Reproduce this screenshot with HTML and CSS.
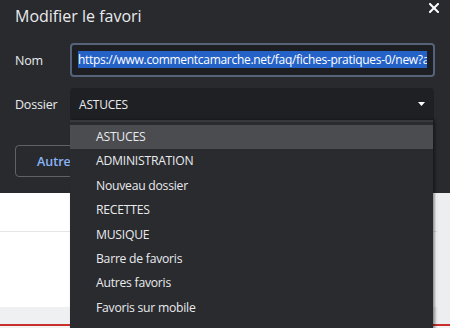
FILE: index.html
```html
<!DOCTYPE html>
<html lang="fr">
<head>
<meta charset="utf-8">
<title>Modifier le favori</title>
<link rel="stylesheet" href="styles.css">
</head>
<body>
<div class="screen">
  <section class="dialog">
    <header class="dialog-head">
      <h1 class="title">Modifier le favori</h1>
      <button class="close" aria-label="Fermer">
        <svg width="10" height="10" viewBox="0 0 10 10"><path d="M1 1L9 9M9 1L1 9" stroke="#ffffff" stroke-width="2" stroke-linecap="square" fill="none"/></svg>
      </button>
    </header>
    <div class="form">
      <span class="label">Nom</span>
      <div class="input"><span class="input-text"><span class="selection">https://www.commentcamarche.net/faq/fiches-pratiques-0/new?a</span></span></div>
      <span class="label">Dossier</span>
      <div class="select">
        <span class="select-text">ASTUCES</span>
        <svg class="arrow" width="7" height="4" viewBox="0 0 7 4"><path d="M0 0H7L3.5 4Z" fill="#ffffff"/></svg>
      </div>
    </div>
    <div class="actions">
      <button class="btn">Autres...</button>
    </div>
  </section>
  <main class="page">
    <div class="page-body">
      <div class="content">
        <div class="rule"></div>
        <div class="band"></div>
      </div>
      <div class="scrollbar"></div>
    </div>
    <div class="redline"></div>
    <div class="foot"></div>
  </main>
  <ul class="dropdown">
    <li class="item active">ASTUCES</li>
    <li class="item">ADMINISTRATION</li>
    <li class="item">Nouveau dossier</li>
    <li class="item">RECETTES</li>
    <li class="item">MUSIQUE</li>
    <li class="item">Barre de favoris</li>
    <li class="item">Autres favoris</li>
    <li class="item">Favoris sur mobile</li>
  </ul>
</div>
</body>
</html>
```

FILE: styles.css
```css
* { box-sizing: border-box; }
html, body { margin: 0; padding: 0; }
body {
  width: 450px;
  height: 328px;
  overflow: hidden;
  background: #ffffff;
  font-family: "Open Sans", "Noto Sans", sans-serif;
}
.screen {
  position: relative;
  width: 450px;
  height: 328px;
  display: flex;
  flex-direction: column;
}
.dialog {
  height: 193px;
  background: #292a2d;
  padding: 0 11px 0 15px;
  color: #e8eaed;
}
.dialog-head {
  display: flex;
  justify-content: space-between;
  align-items: flex-start;
  padding-top: 4px;
}
.title {
  margin: 0;
  font-size: 16px;
  font-weight: 400;
  line-height: 24px;
  color: #e8eaed;
}
.close {
  margin-top: -1px;
  padding: 0;
  border: 0;
  background: none;
  width: 10px;
  height: 10px;
  display: block;
}
.close svg { display: block; }
.form {
  margin-top: 15px;
  display: grid;
  grid-template-columns: 55px 365px;
  grid-template-rows: 34px 32px;
  row-gap: 11px;
  align-items: center;
}
.label {
  font-size: 12.5px;
  letter-spacing: -0.2px;
  color: #e8eaed;
}
.input {
  height: 34px;
  border: 2px solid #56627a;
  border-radius: 4px;
  background: #1e1f22;
  padding: 0 6px;
  display: flex;
  align-items: center;
  overflow: hidden;
}
.input-text {
  white-space: nowrap;
  overflow: hidden;
  display: block;
  font-size: 12px;
  letter-spacing: -0.3px;
  line-height: 18px;
}
.selection {
  background: #2562c8;
  color: #ffffff;
}
.select {
  width: 364px;
  height: 32px;
  background: #1f2023;
  border-radius: 4px 4px 0 0;
  padding: 0 9px;
  display: flex;
  align-items: center;
  justify-content: space-between;
}
.select-text {
  font-size: 12px;
  letter-spacing: -0.2px;
  color: #e8eaed;
}
.arrow { display: block; }
.actions {
  margin-top: 25px;
  display: flex;
}
.btn {
  height: 32px;
  width: 100px;
  border: 1px solid #5f6368;
  border-radius: 4px;
  background: transparent;
  color: #8ab4f8;
  font-family: inherit;
  font-size: 12.5px;
  font-weight: 600;
  text-align: left;
  padding: 0 0 0 21px;
}
.page {
  flex: 1;
  display: flex;
  flex-direction: column;
}
.page-body {
  flex: 1;
  display: flex;
}
.content {
  flex: 1;
  display: flex;
  flex-direction: column;
  background: #ffffff;
}
.rule {
  margin-top: 38px;
  height: 1px;
  background: #e6e6e6;
}
.band {
  margin-top: auto;
  height: 17px;
  background: #eef0f2;
}
.scrollbar {
  width: 13px;
  background: #eceef0;
}
.redline {
  height: 2px;
  background: #c9302c;
}
.foot {
  height: 2px;
  background: #f2f2f2;
}
.dropdown {
  position: absolute;
  left: 70px;
  top: 120px;
  width: 363px;
  bottom: -10px;
  margin: 0;
  padding: 3px 0 0;
  list-style: none;
  background: #2a2b2f;
  border-top: 2px solid #38393d;
  box-shadow: 2px 0 3px rgba(0, 0, 0, 0.45);
}
.item {
  height: 24.4px;
  line-height: 24.4px;
  padding-left: 26px;
  font-size: 12.2px;
  letter-spacing: -0.25px;
  color: #e8eaed;
}
.item.active {
  background: #4b4c50;
}
```
